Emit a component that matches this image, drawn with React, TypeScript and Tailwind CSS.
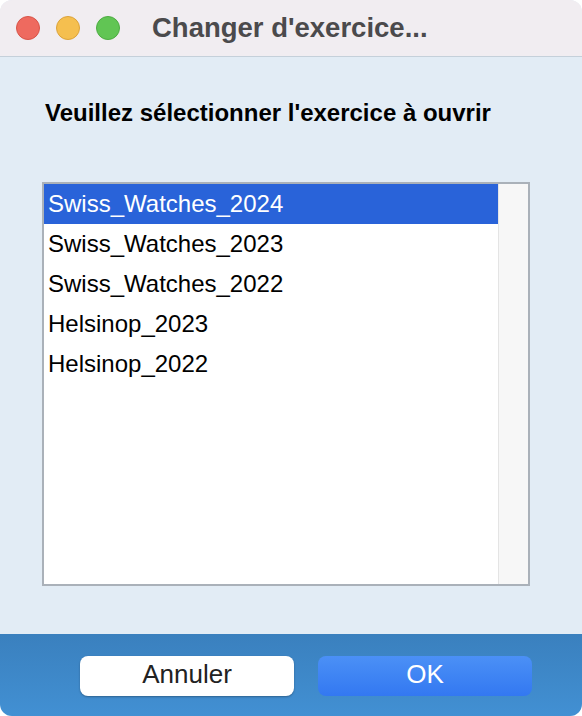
import React from "react";

const items = [
  "Swiss_Watches_2024",
  "Swiss_Watches_2023",
  "Swiss_Watches_2022",
  "Helsinop_2023",
  "Helsinop_2022",
];

export default function App() {
  return (
    <div
      className="w-[582px] h-[716px] bg-white"
      style={{ fontFamily: "'Liberation Sans', Arial, sans-serif" }}
    >
      <div className="w-full h-full rounded-[12px] overflow-hidden flex flex-col bg-[#e2ecf5]">
        {/* Title bar */}
        <div className="h-[57px] shrink-0 bg-[#f1edf1] border-b border-[#c5d0da] flex items-center pl-[16px]">
          <div className="flex items-center gap-[16px]">
            <div className="w-[24px] h-[24px] rounded-full bg-[#ee6a5f] border border-[#d85448]" />
            <div className="w-[24px] h-[24px] rounded-full bg-[#f5bf4f] border border-[#dca33a]" />
            <div className="w-[24px] h-[24px] rounded-full bg-[#61c554] border border-[#4dac42]" />
          </div>
          <div className="ml-[32px] text-[27.5px] font-bold text-[#4b4a4c] leading-none">
            Changer d'exercice...
          </div>
        </div>

        {/* Body */}
        <div className="flex-1 flex flex-col px-[42px]">
          <div className="mt-[44px] pl-[3px] text-[24px] font-bold text-black leading-none">
            Veuillez sélectionner l'exercice à ouvrir
          </div>
          <div className="mt-[57px] w-[488px] h-[404px] border-2 border-[#aab1b9] bg-white flex">
            <div className="flex-1 flex flex-col">
              {items.map((it, i) => (
                <div
                  key={it}
                  className={
                    i === 0
                      ? "h-[40px] flex items-center pl-[4px] text-[24px] bg-[#2963d9] text-white"
                      : "h-[40px] flex items-center pl-[4px] text-[24px] text-black"
                  }
                >
                  {it}
                </div>
              ))}
            </div>
            <div className="w-[30px] bg-[#f7f7f7] border-l border-[#e4e4e4]" />
          </div>
        </div>

        {/* Bottom bar */}
        <div className="h-[82px] shrink-0 bg-gradient-to-b from-[#3a80be] to-[#4290d3] flex items-start pt-[22px] pl-[80px] gap-[24px]">
          <div className="w-[214px] h-[40px] rounded-[8px] bg-white shadow-[0_1px_2px_rgba(0,0,0,0.3)] flex items-center justify-center pb-[4px] text-[26px] text-[#222]">
            Annuler
          </div>
          <div className="w-[214px] h-[40px] rounded-[8px] bg-gradient-to-b from-[#4b90f6] to-[#3378f1] flex items-center justify-center pb-[4px] text-[26px] text-white">
            OK
          </div>
        </div>
      </div>
    </div>
  );
}
